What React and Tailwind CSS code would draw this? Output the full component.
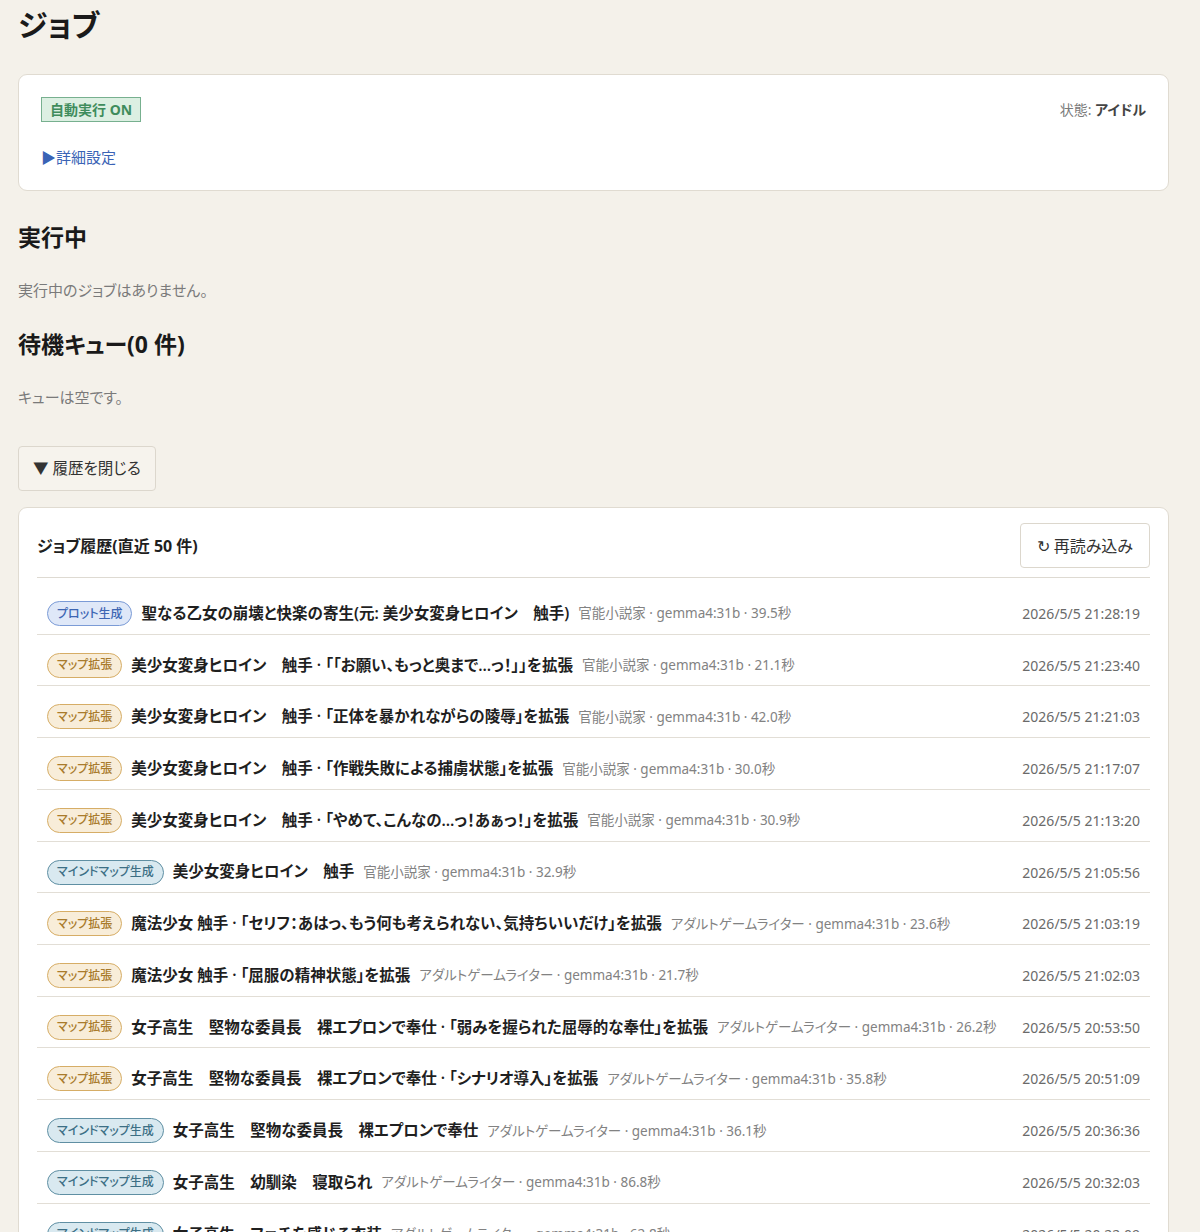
import React, { useState } from 'react';

const FONT = { fontFamily: '"Noto Sans", "Noto Sans CJK JP", sans-serif' };

const KIND_STYLES = {
  plot: 'bg-[#dfe8f8] border-[#7b9bd6] text-[#3d66b3]',
  expand: 'bg-[#f8edd9] border-[#d6ad66] text-[#a97b2c]',
  mindmap: 'bg-[#d9e9f0] border-[#5f8fa3] text-[#3c6f85]',
};

const KIND_LABELS = {
  plot: 'プロット生成',
  expand: 'マップ拡張',
  mindmap: 'マインドマップ生成',
};

const NOVELIST = '官能小説家';
const GAME_WRITER = 'アダルトゲームライター';

const jobs = [
  { id: 1, kind: 'plot', title: '聖なる乙女の崩壊と快楽の寄生(元: 美少女変身ヒロイン　触手)', persona: NOVELIST, secs: '39.5', at: '2026/5/5 21:28:19' },
  { id: 2, kind: 'expand', title: '美少女変身ヒロイン　触手 · 「「お願い、もっと奥まで…っ！」」を拡張', persona: NOVELIST, secs: '21.1', at: '2026/5/5 21:23:40' },
  { id: 3, kind: 'expand', title: '美少女変身ヒロイン　触手 · 「正体を暴かれながらの陵辱」を拡張', persona: NOVELIST, secs: '42.0', at: '2026/5/5 21:21:03' },
  { id: 4, kind: 'expand', title: '美少女変身ヒロイン　触手 · 「作戦失敗による捕虜状態」を拡張', persona: NOVELIST, secs: '30.0', at: '2026/5/5 21:17:07' },
  { id: 5, kind: 'expand', title: '美少女変身ヒロイン　触手 · 「やめて、こんなの…っ！あぁっ！」を拡張', persona: NOVELIST, secs: '30.9', at: '2026/5/5 21:13:20' },
  { id: 6, kind: 'mindmap', title: '美少女変身ヒロイン　触手', persona: NOVELIST, secs: '32.9', at: '2026/5/5 21:05:56' },
  { id: 7, kind: 'expand', title: '魔法少女 触手 · 「セリフ：あはっ、もう何も考えられない、気持ちいいだけ」を拡張', persona: GAME_WRITER, secs: '23.6', at: '2026/5/5 21:03:19' },
  { id: 8, kind: 'expand', title: '魔法少女 触手 · 「屈服の精神状態」を拡張', persona: GAME_WRITER, secs: '21.7', at: '2026/5/5 21:02:03' },
  { id: 9, kind: 'expand', title: '女子高生　堅物な委員長　裸エプロンで奉仕 · 「弱みを握られた屈辱的な奉仕」を拡張', persona: GAME_WRITER, secs: '26.2', at: '2026/5/5 20:53:50' },
  { id: 10, kind: 'expand', title: '女子高生　堅物な委員長　裸エプロンで奉仕 · 「シナリオ導入」を拡張', persona: GAME_WRITER, secs: '35.8', at: '2026/5/5 20:51:09' },
  { id: 11, kind: 'mindmap', title: '女子高生　堅物な委員長　裸エプロンで奉仕', persona: GAME_WRITER, secs: '36.1', at: '2026/5/5 20:36:36' },
  { id: 12, kind: 'mindmap', title: '女子高生　幼馴染　寝取られ', persona: GAME_WRITER, secs: '86.8', at: '2026/5/5 20:32:03' },
  { id: 13, kind: 'mindmap', title: '女子高生　フェチを感じる衣装', persona: GAME_WRITER, secs: '62.8', at: '2026/5/5 20:22:09' },
];

const KindBadge = ({ kind }) => (
  <span className={`inline-flex h-[25px] shrink-0 items-center rounded-full border px-[9px] text-[12px] font-medium ${KIND_STYLES[kind]}`}>
    {KIND_LABELS[kind]}
  </span>
);

const JobRow = ({ job }) => (
  <div className="flex items-center border-b border-[#e2ded6] pl-[10px] pr-[10px] pt-[18px] pb-[7.73px]">
    <div className="flex min-w-0 flex-1 items-center gap-[9px] overflow-hidden">
      <KindBadge kind={job.kind} />
      <span className="whitespace-nowrap text-[15.5px] font-semibold text-[#1f1f1f]">{job.title}</span>
      <span className="whitespace-nowrap text-[13.5px] text-[#828282]">
        {job.persona} · gemma4:31b · {job.secs}秒
      </span>
    </div>
    <span className="ml-4 shrink-0 whitespace-nowrap text-[14px] text-[#6a6a6a]">{job.at}</span>
  </div>
);

const App = () => {
  const [showHistory, setShowHistory] = useState(true);

  return (
    <div
      className="min-h-screen bg-[#f4f1ea] pl-[18px] pr-[31px] pt-[4px] pb-10 text-[#222] [font-feature-settings:'palt']"
      style={FONT}
    >
      <h1 className="text-[30px] font-bold leading-[42px] text-[#1a1a1a]">ジョブ</h1>

      {/* auto-run panel */}
      <div className="mt-[28px] rounded-[9px] border border-[#e0dbd1] bg-white px-[22px] pt-[22px] pb-[21px]">
        <div className="flex items-start justify-between">
          <span className="inline-flex h-[25px] items-center border border-[#77b08f] bg-[#dcefe2] px-[8px] text-[14px] font-bold text-[#3f8c5c]">
            自動実行 ON
          </span>
          <span className="pt-[2px] text-[14px] text-[#7a7a7a]">
            状態: <span className="font-semibold text-[#444]">アイドル</span>
          </span>
        </div>
        <div className="mt-[23px] text-[15px] leading-[24px] text-[#3a63b5]">▶詳細設定</div>
      </div>

      <h2 className="mt-[30px] text-[23px] font-bold leading-[32px] text-[#1a1a1a]">実行中</h2>
      <p className="mt-[25px] text-[15px] leading-[24px] text-[#7a7a7a]">実行中のジョブはありません。</p>

      <h2 className="mt-[26px] text-[23px] font-bold leading-[32px] text-[#1a1a1a]">待機キュー(0 件)</h2>
      <p className="mt-[25px] text-[15px] leading-[24px] text-[#7a7a7a]">キューは空です。</p>

      <button
        className="mt-[37px] h-[45px] rounded-[4px] border border-[#dcd7cd] bg-[#f6f3ed] px-[14px] text-[15.5px] text-[#333]"
        onClick={() => setShowHistory(!showHistory)}
      >
        {showHistory ? '▼ 履歴を閉じる' : '▶ 履歴を開く'}
      </button>

      {showHistory && (
        <div className="mt-[16px] rounded-[9px] border border-[#e0dbd1] bg-white px-[18px] pt-[15px]">
          <div className="flex items-center justify-between border-b border-[#dedad2] pb-[9px]">
            <h3 className="text-[16px] font-bold text-[#1f1f1f]">ジョブ履歴(直近 50 件)</h3>
            <button className="h-[45px] rounded-[4px] border border-[#dcd7cd] bg-white px-[16px] text-[16px] text-[#333]">
              ↻ 再読み込み
            </button>
          </div>
          <div className="pt-[5px]">
            {jobs.map(job => (
              <JobRow key={job.id} job={job} />
            ))}
          </div>
        </div>
      )}
    </div>
  );
};

export default App;
